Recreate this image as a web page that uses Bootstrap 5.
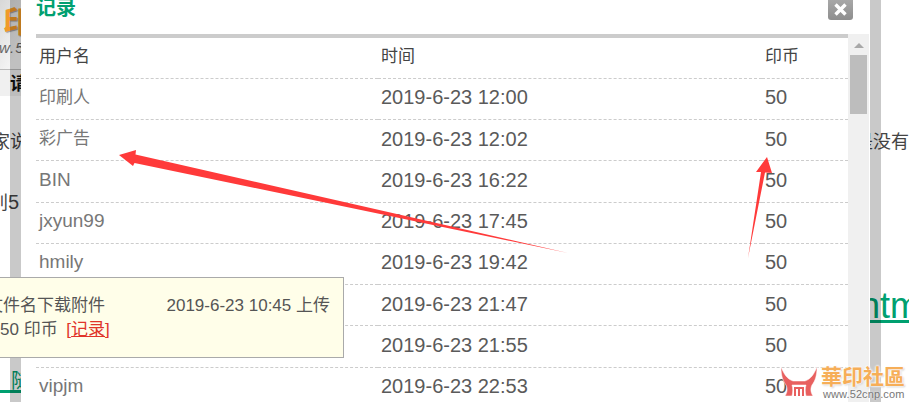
<!DOCTYPE html>
<html lang="zh-CN">
<head>
  <meta charset="UTF-8" />
  <meta name="viewport" content="width=device-width, initial-scale=1.0"/>
  <title>记录</title>
  <link href="https://cdn.jsdelivr.net/npm/bootstrap@5.3.0/dist/css/bootstrap.min.css" rel="stylesheet"/>
  <style>
    html, body { height: 402px; overflow: hidden; }
    body { position: relative; background: #fff; color: #444; font-family: "Liberation Sans", "Noto Sans CJK SC", sans-serif; font-size: 18px; }

    /* page behind the dialog */
    .site-head { width: 120px; height: 70px; background: linear-gradient(120deg, #d8d8d8, #f4f4f4 30%); border-bottom: 1px solid #bbb; overflow: hidden; }
    .site-logo { margin-left: 3px; margin-top: 5px; color: #f29a28; font-size: 30px; font-weight: 700; line-height: 34px; text-shadow: 1px 1px 1px #999; }
    .site-url { color: #666; font-size: 15px; font-style: italic; line-height: 16px; margin-top: 1px; margin-left: -1px; letter-spacing: 1px; }
    .site-nav { width: 120px; height: 26px; background: #f0f0f0; padding-left: 10px; color: #111; font-weight: 700; line-height: 28px; }
    .back-one { margin: 36px 0 0 -8px; line-height: 20px; }
    .back-two { margin: 40px 0 0 -10px; line-height: 20px; font-size: 18px; }
    .back-two b { font-weight: 400; font-size: 20px; }
    .back-link { margin: 73px -11px 0 0; line-height: 40px; font-size: 36px; }
    .back-link a, .back-foot a { color: #00a070; text-decoration-thickness: 3px; text-underline-offset: 2px; }
    .back-foot { margin-top: 45px; line-height: 20px; font-size: 20px; }

    /* dialog */
    .rec-win { position: absolute; left: 10px; top: -10px; width: 871px; height: 430px; border: 11px solid rgba(0, 0, 0, .21); border-top: 0; border-bottom: 0; background: #fff; background-clip: padding-box; padding-left: 15px; }
    .rec-title { height: 44px; color: #00a070; font-size: 20px; font-weight: 700; line-height: 36px; }
    .rec-close { position: absolute; left: 807px; top: 0; width: 25px; height: 30px; padding-top: 10px; background: linear-gradient(#b4b4b4, #8e8e8e); border-radius: 0 0 3px 3px; }
    .rec-close svg { display: block; margin: 3px auto 0; }
    .rec-table { width: 812px; table-layout: fixed; border-top: 4px solid #ccc; margin: 0; }
    .rec-table th, .rec-table td { height: 41.25px; padding: 0 0 3px 3px; border-bottom: 1px dashed #ccc; vertical-align: middle; font-weight: 400; background: transparent; box-shadow: none; }
    .rec-table th { height: 42.25px; color: #444; font-size: 17px; }
    .rec-table td { color: #5a5a5a; font-size: 20px; }
    .rec-table td.rec-name { color: #777; font-size: 19px; }
    .rec-table .rec-cjk { font-size: 17px; }
    .rec-bar { width: 21px; background: #f0f0f0; padding: 0 2px; }
    .rec-up { width: 0; height: 0; margin: 9px auto 7px; border: 5px solid transparent; border-top: 0; border-bottom: 5px solid #a8a8a8; }
    .rec-thumb { height: 59px; background: #bdbdbd; }

    /* tooltip */
    .file-tip { position: absolute; left: -1px; top: 277px; width: 345px; height: 81px; background: #fffee9; border: 1px solid #aaa; padding: 16px 13px 0 0; color: #555; font-size: 17px; line-height: 24px; }
    .file-tip .tip-name { margin-left: -14px; }
    .file-tip .tip-rec { color: #e0342a; margin-left: 4px; }
    .file-tip .tip-rec u { color: #e0342a; }

    /* annotations and watermark */
    .mark-layer { position: absolute; left: 0; top: 0; pointer-events: none; }
    .wm-box { position: absolute; left: 781px; top: 367px; width: 128px; height: 35px; }
    .wm-logo { display: block; overflow: visible; }
    .wm-name { position: absolute; left: 40px; top: -3px; color: #f6ae58; font-size: 21px; font-weight: 700; line-height: 26px; white-space: nowrap; text-shadow: 0 0 2px #fff, 0 0 2px #fff, 0 0 3px #fff, 1px 1px 2px #bbb; }
    .wm-url { position: absolute; left: 42px; top: 20px; color: #777; font-size: 11px; line-height: 14px; letter-spacing: .1px; white-space: nowrap; text-shadow: 0 0 2px #fff; }
  </style>
</head>
<body>

  <div class="site-head">
    <div class="site-logo">印</div>
    <div class="site-url">w.52</div>
  </div>
  <div class="site-nav">请</div>
  <div class="back-one d-flex justify-content-between text-nowrap"><span>家说</span><span>是没有</span></div>
  <div class="back-two text-nowrap">别<b>5</b></div>
  <div class="back-link d-flex justify-content-end"><a href="#">ntm</a></div>
  <div class="back-foot text-nowrap"><a href="#">&nbsp;&nbsp;随</a></div>

  <div class="rec-win">
    <div class="rec-title">记录</div>
    <div class="rec-close">
      <svg width="15" height="13" viewBox="0 0 15 13"><path d="M2.5 1.5 12.5 11.5M12.5 1.5 2.5 11.5" stroke="#fff" stroke-width="3.4" fill="none"/></svg>
    </div>
    <div class="d-flex">
      <table class="table rec-table">
        <colgroup><col style="width:342px"><col style="width:384px"><col></colgroup>
        <thead>
          <tr><th>用户名</th><th>时间</th><th>印币</th></tr>
        </thead>
        <tbody>
          <tr><td class="rec-name"><span class="rec-cjk">印刷人</span></td><td>2019-6-23 12:00</td><td>50</td></tr>
          <tr><td class="rec-name"><span class="rec-cjk">彩广告</span></td><td>2019-6-23 12:02</td><td>50</td></tr>
          <tr><td class="rec-name">BIN</td><td>2019-6-23 16:22</td><td>50</td></tr>
          <tr><td class="rec-name">jxyun99</td><td>2019-6-23 17:45</td><td>50</td></tr>
          <tr><td class="rec-name">hmily</td><td>2019-6-23 19:42</td><td>50</td></tr>
          <tr><td class="rec-name"></td><td>2019-6-23 21:47</td><td>50</td></tr>
          <tr><td class="rec-name"></td><td>2019-6-23 21:55</td><td>50</td></tr>
          <tr><td class="rec-name">vipjm</td><td>2019-6-23 22:53</td><td>50</td></tr>
        </tbody>
      </table>
      <div class="rec-bar">
        <div class="rec-up"></div>
        <div class="rec-thumb"></div>
      </div>
    </div>
  </div>

  <div class="file-tip">
    <div class="d-flex justify-content-between text-nowrap"><span class="tip-name">文件名下载附件</span><span>2019-6-23 10:45 上传</span></div>
    <div class="text-nowrap">50 印币 <span class="tip-rec">[<u>记录</u>]</span></div>
  </div>

  <svg class="mark-layer" width="909" height="402" viewBox="0 0 909 402">
    <path fill="#ff3a3a" d="M119 155 136 150 135.500 154.500 568 253 134.500 163 133 166Z"/>
    <path fill="#ff3a3a" d="M767 157 772 173 765 172.500 748 258 761 172 756 172Z"/>
  </svg>

  <div class="wm-box">
    <svg class="wm-logo" width="36" height="30" viewBox="0 0 36 30">
      <path fill="#e8605f" stroke="#fff" stroke-width=".5" d="M0 0C3 7 6 12 12 14H24C30 12 33 7 36 0 36 9 34 14 31 18 29 22 30 26 32 29H25C24 25 24 21 25 18H11C12 21 12 25 11 29H4C6 26 7 22 5 18 2 14 0 9 0 0Z"/>
      <path fill="none" stroke="#e8605f" stroke-width="2" d="M14 29V21H22V29M18 21V29"/>
    </svg>
    <span class="wm-name">華印社區</span>
    <span class="wm-url">www.52cnp.com</span>
  </div>

  <script src="https://cdn.jsdelivr.net/npm/bootstrap@5.3.0/dist/js/bootstrap.bundle.min.js"></script>
</body>
</html>
